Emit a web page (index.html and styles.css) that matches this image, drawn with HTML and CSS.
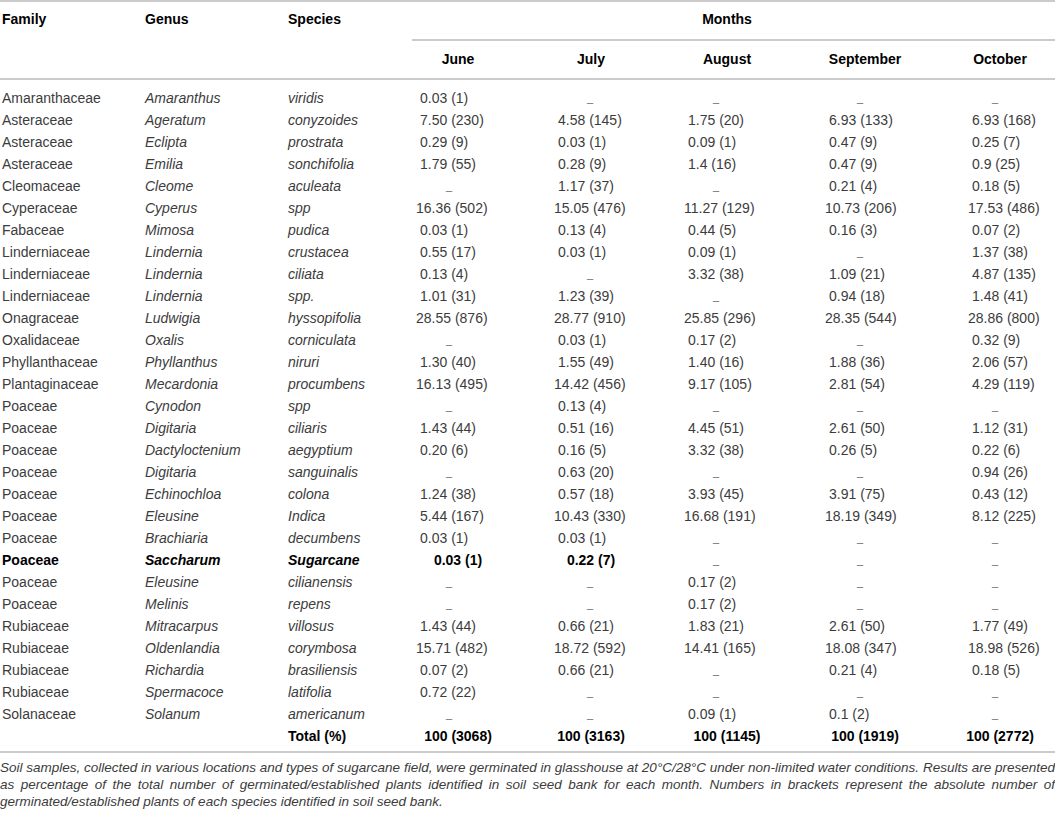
FILE: index.html
```html
<!DOCTYPE html>
<html>
<head>
    <title>Soil seed bank germination by month</title>
    <meta name="viewport" content="width=device-width, initial-scale=1">
    <link rel="stylesheet" href="styles.css">
</head>
<body>
    <table class="seeds">
        <colgroup>
            <col class="c-family"><col class="c-genus"><col class="c-species">
            <col class="c-jun"><col class="c-jul"><col class="c-aug"><col class="c-sep"><col class="c-oct">
        </colgroup>
        <thead>
            <tr>
                <th rowspan="2" class="lead">Family</th>
                <th rowspan="2" class="lead">Genus</th>
                <th rowspan="2" class="lead">Species</th>
                <th colspan="5" class="months">Months</th>
            </tr>
            <tr class="month-names">
                <th>June</th><th>July</th><th>August</th><th>September</th><th>October</th>
            </tr>
        </thead>
        <tbody>
            <tr class="first"><td>Amaranthaceae</td><td><i>Amaranthus</i></td><td><i>viridis</i></td><td>0.03 (1)</td><td class="d">_</td><td class="d">_</td><td class="d">_</td><td class="d">_</td></tr>
            <tr><td>Asteraceae</td><td><i>Ageratum</i></td><td><i>conyzoides</i></td><td>7.50 (230)</td><td>4.58 (145)</td><td>1.75 (20)</td><td>6.93 (133)</td><td>6.93 (168)</td></tr>
            <tr><td>Asteraceae</td><td><i>Eclipta</i></td><td><i>prostrata</i></td><td>0.29 (9)</td><td>0.03 (1)</td><td>0.09 (1)</td><td>0.47 (9)</td><td>0.25 (7)</td></tr>
            <tr><td>Asteraceae</td><td><i>Emilia</i></td><td><i>sonchifolia</i></td><td>1.79 (55)</td><td>0.28 (9)</td><td>1.4 (16)</td><td>0.47 (9)</td><td>0.9 (25)</td></tr>
            <tr><td>Cleomaceae</td><td><i>Cleome</i></td><td><i>aculeata</i></td><td class="d">_</td><td>1.17 (37)</td><td class="d">_</td><td>0.21 (4)</td><td>0.18 (5)</td></tr>
            <tr><td>Cyperaceae</td><td><i>Cyperus</i></td><td><i>spp</i></td><td class="w">16.36 (502)</td><td class="w">15.05 (476)</td><td class="w">11.27 (129)</td><td class="w">10.73 (206)</td><td class="w">17.53 (486)</td></tr>
            <tr><td>Fabaceae</td><td><i>Mimosa</i></td><td><i>pudica</i></td><td>0.03 (1)</td><td>0.13 (4)</td><td>0.44 (5)</td><td>0.16 (3)</td><td>0.07 (2)</td></tr>
            <tr><td>Linderniaceae</td><td><i>Lindernia</i></td><td><i>crustacea</i></td><td>0.55 (17)</td><td>0.03 (1)</td><td>0.09 (1)</td><td class="d">_</td><td>1.37 (38)</td></tr>
            <tr><td>Linderniaceae</td><td><i>Lindernia</i></td><td><i>ciliata</i></td><td>0.13 (4)</td><td class="d">_</td><td>3.32 (38)</td><td>1.09 (21)</td><td>4.87 (135)</td></tr>
            <tr><td>Linderniaceae</td><td><i>Lindernia</i></td><td><i>spp.</i></td><td>1.01 (31)</td><td>1.23 (39)</td><td class="d">_</td><td>0.94 (18)</td><td>1.48 (41)</td></tr>
            <tr><td>Onagraceae</td><td><i>Ludwigia</i></td><td><i>hyssopifolia</i></td><td class="w">28.55 (876)</td><td class="w">28.77 (910)</td><td class="w">25.85 (296)</td><td class="w">28.35 (544)</td><td class="w">28.86 (800)</td></tr>
            <tr><td>Oxalidaceae</td><td><i>Oxalis</i></td><td><i>corniculata</i></td><td class="d">_</td><td>0.03 (1)</td><td>0.17 (2)</td><td class="d">_</td><td>0.32 (9)</td></tr>
            <tr><td>Phyllanthaceae</td><td><i>Phyllanthus</i></td><td><i>niruri</i></td><td>1.30 (40)</td><td>1.55 (49)</td><td>1.40 (16)</td><td>1.88 (36)</td><td>2.06 (57)</td></tr>
            <tr><td>Plantaginaceae</td><td><i>Mecardonia</i></td><td><i>procumbens</i></td><td class="w">16.13 (495)</td><td class="w">14.42 (456)</td><td>9.17 (105)</td><td>2.81 (54)</td><td>4.29 (119)</td></tr>
            <tr><td>Poaceae</td><td><i>Cynodon</i></td><td><i>spp</i></td><td class="d">_</td><td>0.13 (4)</td><td class="d">_</td><td class="d">_</td><td class="d">_</td></tr>
            <tr><td>Poaceae</td><td><i>Digitaria</i></td><td><i>ciliaris</i></td><td>1.43 (44)</td><td>0.51 (16)</td><td>4.45 (51)</td><td>2.61 (50)</td><td>1.12 (31)</td></tr>
            <tr><td>Poaceae</td><td><i>Dactyloctenium</i></td><td><i>aegyptium</i></td><td>0.20 (6)</td><td>0.16 (5)</td><td>3.32 (38)</td><td>0.26 (5)</td><td>0.22 (6)</td></tr>
            <tr><td>Poaceae</td><td><i>Digitaria</i></td><td><i>sanguinalis</i></td><td class="d">_</td><td>0.63 (20)</td><td class="d">_</td><td class="d">_</td><td>0.94 (26)</td></tr>
            <tr><td>Poaceae</td><td><i>Echinochloa</i></td><td><i>colona</i></td><td>1.24 (38)</td><td>0.57 (18)</td><td>3.93 (45)</td><td>3.91 (75)</td><td>0.43 (12)</td></tr>
            <tr><td>Poaceae</td><td><i>Eleusine</i></td><td><i>Indica</i></td><td>5.44 (167)</td><td class="w">10.43 (330)</td><td class="w">16.68 (191)</td><td class="w">18.19 (349)</td><td>8.12 (225)</td></tr>
            <tr><td>Poaceae</td><td><i>Brachiaria</i></td><td><i>decumbens</i></td><td>0.03 (1)</td><td>0.03 (1)</td><td class="d">_</td><td class="d">_</td><td class="d">_</td></tr>
            <tr class="crop"><td>Poaceae</td><td><i>Saccharum</i></td><td><i>Sugarcane</i></td><td class="c">0.03 (1)</td><td class="c">0.22 (7)</td><td class="d">_</td><td class="d">_</td><td class="d">_</td></tr>
            <tr><td>Poaceae</td><td><i>Eleusine</i></td><td><i>cilianensis</i></td><td class="d">_</td><td class="d">_</td><td>0.17 (2)</td><td class="d">_</td><td class="d">_</td></tr>
            <tr><td>Poaceae</td><td><i>Melinis</i></td><td><i>repens</i></td><td class="d">_</td><td class="d">_</td><td>0.17 (2)</td><td class="d">_</td><td class="d">_</td></tr>
            <tr><td>Rubiaceae</td><td><i>Mitracarpus</i></td><td><i>villosus</i></td><td>1.43 (44)</td><td>0.66 (21)</td><td>1.83 (21)</td><td>2.61 (50)</td><td>1.77 (49)</td></tr>
            <tr><td>Rubiaceae</td><td><i>Oldenlandia</i></td><td><i>corymbosa</i></td><td class="w">15.71 (482)</td><td class="w">18.72 (592)</td><td class="w">14.41 (165)</td><td class="w">18.08 (347)</td><td class="w">18.98 (526)</td></tr>
            <tr><td>Rubiaceae</td><td><i>Richardia</i></td><td><i>brasiliensis</i></td><td>0.07 (2)</td><td>0.66 (21)</td><td class="d">_</td><td>0.21 (4)</td><td>0.18 (5)</td></tr>
            <tr><td>Rubiaceae</td><td><i>Spermacoce</i></td><td><i>latifolia</i></td><td>0.72 (22)</td><td class="d">_</td><td class="d">_</td><td class="d">_</td><td class="d">_</td></tr>
            <tr><td>Solanaceae</td><td><i>Solanum</i></td><td><i>americanum</i></td><td class="d">_</td><td class="d">_</td><td>0.09 (1)</td><td>0.1 (2)</td><td class="d">_</td></tr>
            <tr class="total"><td></td><td></td><td>Total (%)</td><td class="c">100 (3068)</td><td class="c">100 (3163)</td><td class="c">100 (1145)</td><td class="c">100 (1919)</td><td class="c">100 (2772)</td></tr>
        </tbody>
    </table>
    <p class="note">Soil samples, collected in various locations and types of sugarcane field, were germinated in glasshouse at 20°C/28°C under non-limited water conditions. Results are presented as percentage of the total number of germinated/established plants identified in soil seed bank for each month. Numbers in brackets represent the absolute number of germinated/established plants of each species identified in soil seed bank.</p>
</body>
</html>
```

FILE: styles.css
```css
body { margin: 0; background: #fff; font-family: "Liberation Sans", Arial, sans-serif; color: #3c3c3c; }

.seeds {
    width: 1055px;
    table-layout: fixed;
    border-collapse: separate;
    border-spacing: 0;
    border-top: 2px solid #cbcbcb;
    border-bottom: 2px solid #cbcbcb;
    font-size: 14px;
}
.c-family { width: 145px; }
.c-genus { width: 143px; }
.c-species { width: 124px; }
.c-jun { width: 92px; }
.c-jul { width: 174px; }
.c-aug { width: 98px; }
.c-sep { width: 178px; }
.c-oct { width: 101px; }

th { font-weight: bold; color: #000; line-height: 18px; padding: 0; }
th.lead {
    text-align: left;
    vertical-align: top;
    padding-top: 8px;
    border-bottom: 2px solid #cbcbcb;
}
th.lead:first-child { padding-left: 2px; }
th.months { text-align: center; padding: 8px 13px 11px 0; border-bottom: 2px solid #cbcbcb; }
.month-names th { text-align: center; padding: 9px 0 10px; border-bottom: 2px solid #cbcbcb; }
.month-names th:last-child { padding-right: 9px; }

td { padding: 0; line-height: 22px; height: 22px; white-space: nowrap; }
td:first-child { padding-left: 2px; }
.first td { padding-top: 7px; }
.total td { padding-bottom: 4px; font-weight: bold; color: #000; }

/* month columns: plain values start at a fixed offset */
td:nth-child(4) { padding-left: 8px; }
td:nth-child(5) { padding-left: 54px; }
td:nth-child(6) { padding-left: 10px; }
td:nth-child(7) { padding-left: 53px; }
td:nth-child(8) { padding-left: 18px; }

td.w { text-indent: -4px; }

td.d { font-size: 11px; color: #666; }
td.d:nth-child(4) { text-indent: 26px; }
td.d:nth-child(5) { text-indent: 29px; }
td.d:nth-child(6) { text-indent: 25px; }
td.d:nth-child(7) { text-indent: 28px; }
td.d:nth-child(8) { text-indent: 20px; }

td.c { text-align: center; padding-left: 0; }
td.c:nth-child(8) { padding-right: 9px; }

.crop td { font-weight: bold; color: #000; }
.crop td.d { font-weight: normal; color: #666; }

.note {
    margin: 6px 0 0;
    font-size: 13.5px;
    line-height: 17px;
    font-style: italic;
    text-align: justify;
    color: #3c3c3c;
}
```
